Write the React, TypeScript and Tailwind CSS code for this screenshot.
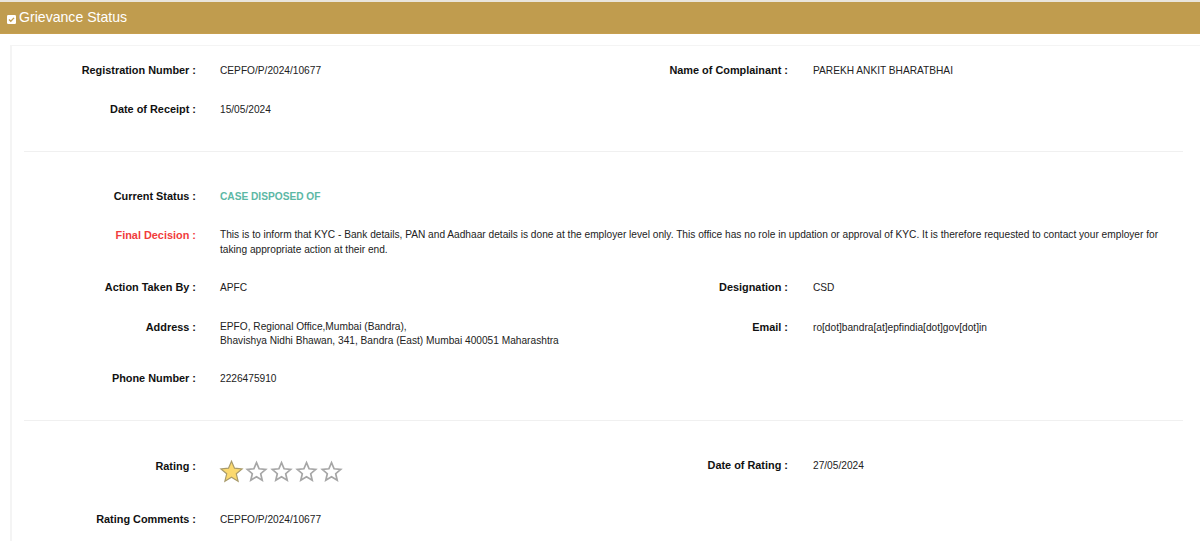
const font = "font-['Liberation_Sans',Arial,sans-serif]";

function Star({ filled }: { filled?: boolean }) {
  return (
    <svg width="25" height="25" viewBox="0 0 25 25" className="shrink-0">
      {filled ? (
        <path
          d="M12.5 2.2l3 7 7.6.7-5.8 4.9 1.8 7.4-6.6-4-6.6 4 1.8-7.4-5.8-4.9 7.6-.7z"
          fill="#fbd96f"
          stroke="#a89a6a"
          strokeWidth="1.2"
        />
      ) : (
        <path
          d="M12.5 3.6l2.6 6.2 6.6.6-5 4.3 1.5 6.5-5.7-3.5-5.7 3.5 1.5-6.5-5-4.3 6.6-.6z"
          fill="#ffffff"
          stroke="#a6a6a6"
          strokeWidth="1.7"
        />
      )}
    </svg>
  );
}

function Field({ label, value, red }: { label: string; value: React.ReactNode; red?: boolean }) {
  return (
    <div className="flex items-start">
      <div className={`w-[184px] shrink-0 text-right text-[10.9px] leading-[17px] font-bold ${red ? 'text-[#f13c3c]' : 'text-[#111]'}`}>
        {label} :
      </div>
      <div className="ml-[24px] min-w-0 flex-1 text-[10.17px] leading-[17px] text-[#222]">{value}</div>
    </div>
  );
}

function RightField({ label, value }: { label: string; value: React.ReactNode }) {
  return (
    <div className="flex items-start">
      <div className="w-[186px] shrink-0 text-right text-[10.9px] leading-[17px] font-bold text-[#111]">
        {label} :
      </div>
      <div className="ml-[25px] text-[10.17px] leading-[17px] text-[#222]">{value}</div>
    </div>
  );
}

function Row({ children, className }: { children: React.ReactNode; className: string }) {
  return <div className={`grid grid-cols-[590px_1fr] ${className}`}>{children}</div>;
}

export default function App() {
  return (
    <div className={`h-[541px] overflow-hidden bg-white ${font}`}>
      <div className="h-[2px] bg-[#e9e5dc]" />
      <div className="flex h-[32px] items-center border-b border-[#c79f4f] bg-[#c09c4e] pl-[7px] text-white">
        <svg width="9" height="9" viewBox="0 0 10 10" className="mt-[3px] shrink-0">
          <rect width="10" height="10" rx="1.5" fill="#fff" />
          <path d="M2.2 5l2 2 3.6-3.8" fill="none" stroke="#c09c4e" strokeWidth="1.5" />
        </svg>
        <span className="ml-[3px] text-[14.1px]">Grievance Status</span>
      </div>

      <div className="mt-[11px] ml-[10px] h-[496px] border-t border-l-2 border-[#f4f4f4] pt-[16px]">
        <Row className="h-[17px]">
          <Field label="Registration Number" value="CEPFO/P/2024/10677" />
          <RightField label="Name of Complainant" value="PAREKH ANKIT BHARATBHAI" />
        </Row>
        <div className="mt-[22px]">
          <Field label="Date of Receipt" value="15/05/2024" />
        </div>
        <div className="mt-[33px] mr-[17px] ml-[12px] h-px bg-[#f0f0f0]" />

        <div className="mt-[36px]">
          <Field label="Current Status" value={<span className="font-bold text-[#5cb8a5]">CASE DISPOSED OF</span>} />
        </div>
        <div className="mt-[22px] mr-[25px]">
          <Field
            red
            label="Final Decision"
            value={
              <span className="block leading-[15px]">
                This is to inform that KYC - Bank details, PAN and Aadhaar details is done at the employer level only. This office has no role in updation or approval of KYC. It is therefore requested to contact your employer for taking appropriate action at their end.
              </span>
            }
          />
        </div>
        <Row className="mt-[22px]">
          <Field label="Action Taken By" value="APFC" />
          <RightField label="Designation" value="CSD" />
        </Row>
        <Row className="mt-[23px]">
          <Field
            label="Address"
            value={
              <span className="mt-px block leading-[14px]">
                EPFO, Regional Office,Mumbai (Bandra),
                <br />
                Bhavishya Nidhi Bhawan, 341, Bandra (East) Mumbai 400051 Maharashtra
              </span>
            }
          />
          <RightField label="Email" value="ro[dot]bandra[at]epfindia[dot]gov[dot]in" />
        </Row>
        <div className="mt-[22px]">
          <Field label="Phone Number" value="2226475910" />
        </div>
        <div className="mt-[33px] mr-[17px] ml-[12px] h-px bg-[#f0f0f0]" />

        <Row className="mt-[37px]">
          <Field
            label="Rating"
            value={
              <span className="mt-px -ml-px flex">
                <Star filled />
                <Star />
                <Star />
                <Star />
                <Star />
              </span>
            }
          />
          <div className="-mt-px">
            <RightField label="Date of Rating" value="27/05/2024" />
          </div>
        </Row>
        <div className="mt-[27px]">
          <Field label="Rating Comments" value="CEPFO/P/2024/10677" />
        </div>
      </div>
    </div>
  );
}
